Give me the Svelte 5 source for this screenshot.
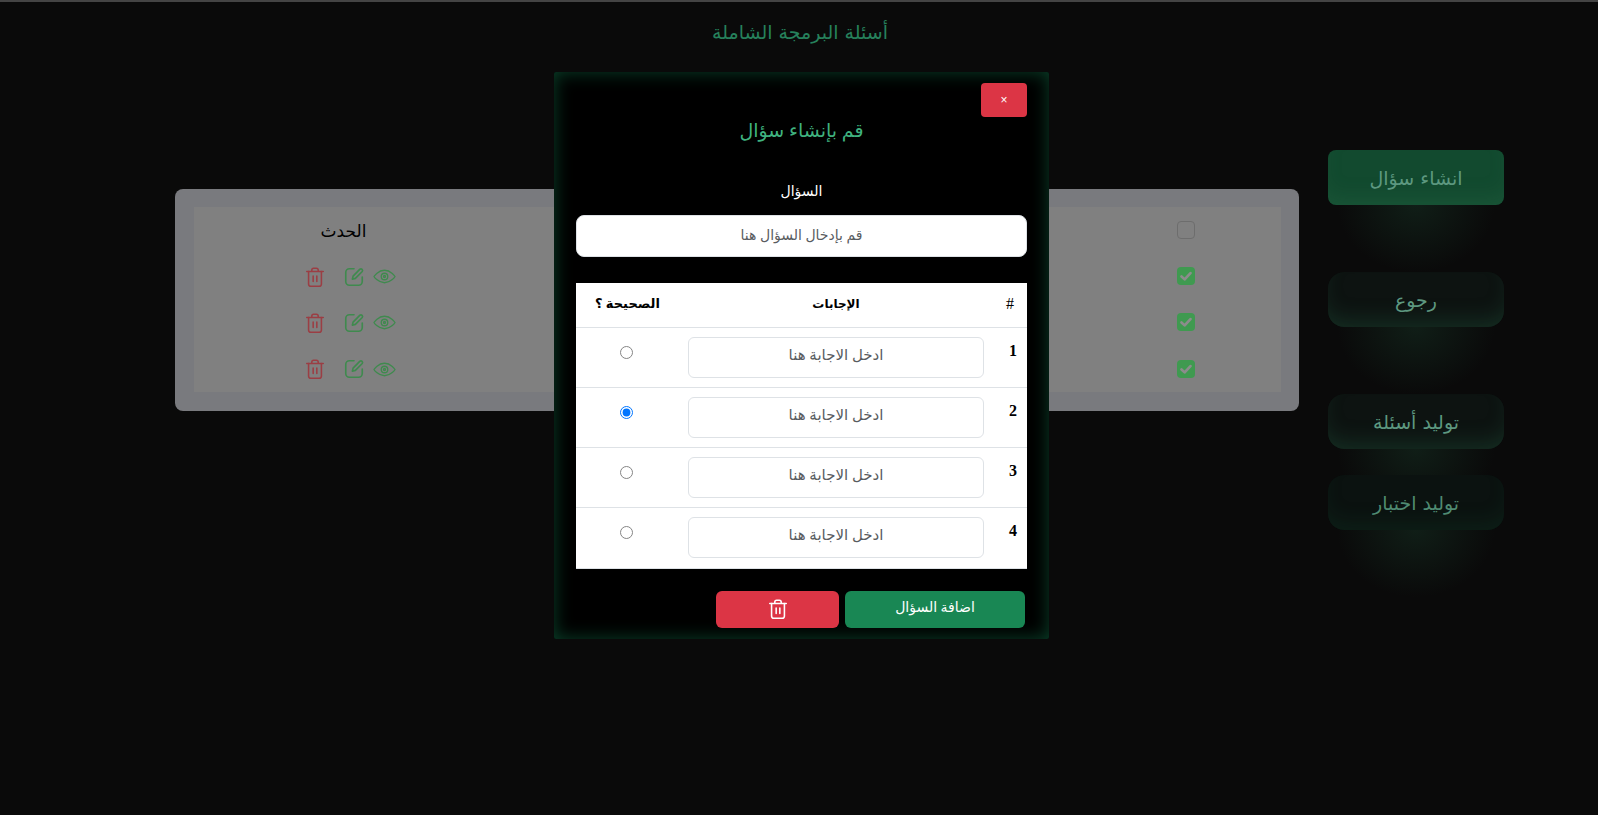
<script>
  const sideButtons = [
    { label: 'انشاء سؤال', cls: 'filled' },
    { label: 'رجوع', cls: 'gap-big' },
    { label: 'توليد أسئلة', cls: 'gap-big' },
    { label: 'توليد اختبار', cls: 'gap-small faint' }
  ];
  const rows = [1, 2, 3];
  const answers = [1, 2, 3, 4];
</script>

{#snippet trash()}
  <svg viewBox="0 0 24 24" class="ico" fill="none" stroke="currentColor" stroke-width="1.7" stroke-linecap="round" stroke-linejoin="round">
    <path d="M3 6h18M8.5 6V4.5A2 2 0 0 1 10.5 2.5h3a2 2 0 0 1 2 2V6" />
    <path d="M5 6v13.5a2.5 2.5 0 0 0 2.5 2.5h9a2.5 2.5 0 0 0 2.5-2.5V6" />
    <path d="M10 11v6M14 11v6" />
  </svg>
{/snippet}

<div class="page">
  <header class="top">أسئلة البرمجة الشاملة</header>

  <main class="content">
    <section class="card">
      <table class="list">
        <thead>
          <tr>
            <th class="c-act">الحدث</th>
            <th class="c-mid"></th>
            <th class="c-check"><span class="box"></span></th>
          </tr>
        </thead>
        <tbody>
          {#each rows as r (r)}
            <tr>
              <td class="c-act">
                <div class="actions">
                  <span class="red">{@render trash()}</span>
                  <span class="green">
                    <svg viewBox="0 0 24 24" class="ico" fill="none" stroke="currentColor" stroke-width="1.8" stroke-linecap="round" stroke-linejoin="round">
                      <path d="M12 3H7a4 4 0 0 0-4 4v10a4 4 0 0 0 4 4h10a4 4 0 0 0 4-4v-5" />
                      <path d="M18.5 3.5a1.8 1.8 0 0 1 2.5 2.5l-7.5 7.5-3.3.8.8-3.3z" />
                    </svg>
                  </span>
                  <span class="green">
                    <svg viewBox="0 0 24 24" class="ico eye" fill="none" stroke="currentColor" stroke-width="1.4" stroke-linecap="round" stroke-linejoin="round">
                      <path d="M1 12s4-6.5 11-6.5S23 12 23 12s-4 6.5-11 6.5S1 12 1 12z" />
                      <circle cx="12" cy="12" r="3.4" />
                      <circle cx="12" cy="12" r="1" />
                    </svg>
                  </span>
                </div>
              </td>
              <td class="c-mid"></td>
              <td class="c-check">
                <span class="box on">
                  <svg viewBox="0 0 16 16" fill="none" stroke="#8c8c8c" stroke-width="2.4" stroke-linecap="round" stroke-linejoin="round"><path d="M4 8.4l2.8 2.6L12 5.4" /></svg>
                </span>
              </td>
            </tr>
          {/each}
        </tbody>
      </table>
    </section>

    <aside class="side">
      {#each sideButtons as b (b.label)}
        <button class="neon {b.cls}">{b.label}</button>
      {/each}
    </aside>
  </main>
</div>

<div class="modal">
  <button class="close">×</button>
  <h2>قم بإنشاء سؤال</h2>
  <label class="q-label" for="q">السؤال</label>
  <input id="q" class="q-input" placeholder="قم بإدخال السؤال هنا" />

  <table class="answers" dir="rtl">
    <thead>
      <tr>
        <th class="num">#</th>
        <th class="ans-head">الإجابات</th>
        <th class="right-col">الصحيحة ؟</th>
      </tr>
    </thead>
    <tbody>
      {#each answers as n (n)}
        <tr>
          <td class="num"><b>{n}</b></td>
          <td class="ans"><input placeholder="ادخل الاجابة هنا" /></td>
          <td class="right-col"><input type="radio" name="correct" checked={n === 2} /></td>
        </tr>
      {/each}
    </tbody>
  </table>

  <div class="foot">
    <button class="btn del">{@render trash()}</button>
    <button class="btn add">اضافة السؤال</button>
  </div>
</div>

<style>
  :global(body) {
    margin: 0;
    background: #0a0a0a;
  }

  .page {
    height: 815px;
    box-sizing: border-box;
    border-top: 2px solid #444;
    overflow: hidden;
    font-family: "DejaVu Sans", sans-serif;
  }

  .top {
    text-align: center;
    color: #26815c;
    font-size: 19px;
    line-height: 22px;
    padding: 19px 0 0 2px;
  }

  .content {
    display: flex;
    align-items: flex-start;
    padding-left: 175px;
    margin-top: 6px;
  }

  .card {
    width: 1124px;
    height: 222px;
    box-sizing: border-box;
    margin-top: 140px;
    padding: 18px 18px 19px 19px;
    background: #797a7e;
    border-radius: 8px;
  }

  .list {
    width: 100%;
    border-collapse: collapse;
    background: #808080;
  }

  .list th, .list td {
    padding: 0;
    height: 46px;
    box-sizing: border-box;
    text-align: center;
    vertical-align: middle;
  }

  .list tr:last-child td { height: 47px; }

  .list th {
    color: #000;
    font-size: 17px;
    font-weight: 400;
  }

  .list th.c-act { padding: 2px 0 0 3px; }

  .c-act { width: 296px; }
  .c-check { width: 190px; }

  .actions {
    display: flex;
    justify-content: center;
    align-items: center;
    gap: 8px;
    margin: 1px 0 0 16px;
  }

  .ico {
    width: 22px;
    height: 22px;
    display: block;
  }

  .ico.eye { width: 23px; height: 23px; }

  .red { color: #9b3e44; margin-right: 9px; }
  .green { color: #3f8a4e; }

  .box {
    display: block;
    width: 18px;
    height: 18px;
    margin: 0 auto;
    box-sizing: border-box;
    border: 1px solid #6d6d6d;
    border-radius: 4px;
  }

  .box.on {
    border: 0;
    background: #3f9a50;
  }

  .box svg { display: block; }

  .side {
    display: flex;
    flex-direction: column;
    width: 176px;
    margin-left: 29px;
    margin-top: 101px;
  }

  .neon {
    position: relative;
    height: 55px;
    border: 0;
    border-radius: 16px;
    color: #5d9880;
    font-family: "DejaVu Sans", sans-serif;
    font-size: 19px;
    background: #0d1311;
    box-shadow: inset 0 -14px 22px -8px rgba(40, 110, 75, 0.3);
  }

  .neon::after {
    content: "";
    position: absolute;
    left: 6px;
    right: 6px;
    top: 100%;
    height: 70px;
    background: radial-gradient(ellipse at 50% 0, rgba(40, 110, 75, 0.2), transparent 68%);
  }

  .neon.filled {
    border-radius: 8px;
    background: #124a2f;
    box-shadow: inset 0 -14px 22px -8px rgba(60, 130, 90, 0.2);
  }

  .neon.gap-big { margin-top: 67px; }
  .neon.gap-small { margin-top: 26px; }
  .neon.faint {
    background: #0b1210;
    color: #4f8a72;
    box-shadow: inset 0 -14px 22px -8px rgba(20, 90, 55, 0.2);
  }

  .modal {
    position: absolute;
    left: 554px;
    top: 72px;
    width: 495px;
    height: 567px;
    box-sizing: border-box;
    padding: 11px 22px 0;
    background: #000;
    border-radius: 2px;
    box-shadow: inset 0 0 18px rgba(16, 110, 70, 0.6);
    font-family: "Liberation Serif", "DejaVu Sans", serif;
  }

  .close {
    display: block;
    margin-left: auto;
    width: 46px;
    height: 34px;
    border: 0;
    border-radius: 4px;
    background: #dc3545;
    color: #fff;
    font-size: 12px;
    font-family: "Liberation Sans", sans-serif;
  }

  h2 {
    margin: 0;
    padding-top: 2px;
    text-align: center;
    color: #3fb27f;
    font-size: 19px;
    line-height: 24px;
    font-weight: 400;
  }

  .q-label {
    display: block;
    margin-top: 37px;
    text-align: center;
    color: #fff;
    font-size: 14px;
    line-height: 24px;
  }

  .q-input {
    display: block;
    box-sizing: border-box;
    width: 100%;
    height: 42px;
    margin-top: 11px;
    border: 1px solid #dee2e6;
    border-radius: 8px;
    text-align: center;
    font-size: 14px;
    font-family: inherit;
    background: #fff;
  }

  input::placeholder { color: #595c5f; }

  .answers {
    width: 451px;
    margin-top: 26px;
    border-collapse: collapse;
    background: #fff;
    color: #000;
    table-layout: fixed;
  }

  .answers th {
    height: 44px;
    box-sizing: border-box;
    padding: 0 0 1px;
    font-size: 13px;
    border-bottom: 1px solid #dee2e6;
  }

  .answers th.ans-head { font-size: 12px; }

  .answers td {
    height: 60px;
    box-sizing: border-box;
    padding: 0;
    text-align: center;
    vertical-align: top;
    border-bottom: 1px solid #dee2e6;
  }

  .answers tr:last-child td { height: 61px; }

  .num { width: 34px; }
  .answers td.num {
    padding: 14px 10px 0 0;
    text-align: right;
    font-size: 16px;
  }

  .answers th.num { font-weight: 400; font-size: 16px; }
  .right-col { width: 103px; }
  .answers td.right-col { padding: 18px 2px 0 0; }

  .answers td.ans { padding-top: 9px; }

  .answers td.ans input {
    box-sizing: border-box;
    display: block;
    width: 296px;
    height: 41px;
    margin: 0 9px;
    padding: 0 0 3px;
    border: 1px solid #dee2e6;
    border-radius: 6px;
    text-align: center;
    font-size: 15px;
    font-family: inherit;
  }

  input[type="radio"] {
    display: block;
    width: 13px;
    height: 13px;
    margin: 0 auto;
  }

  input[type="radio"]:not(:checked) {
    appearance: none;
    box-sizing: border-box;
    border: 1.5px solid #858585;
    border-radius: 50%;
    background: #fff;
  }

  .foot {
    display: flex;
    justify-content: flex-end;
    gap: 6px;
    margin-top: 22px;
    padding-right: 2px;
  }

  .btn {
    height: 37px;
    border: 0;
    border-radius: 6px;
    color: #fff;
    font-size: 14px;
    font-family: inherit;
    padding: 0;
  }

  .del {
    width: 123px;
    background: #dc3545;
    display: flex;
    justify-content: center;
    align-items: center;
  }

  .add {
    width: 180px;
    background: #198754;
    padding-bottom: 4px;
  }
</style>
